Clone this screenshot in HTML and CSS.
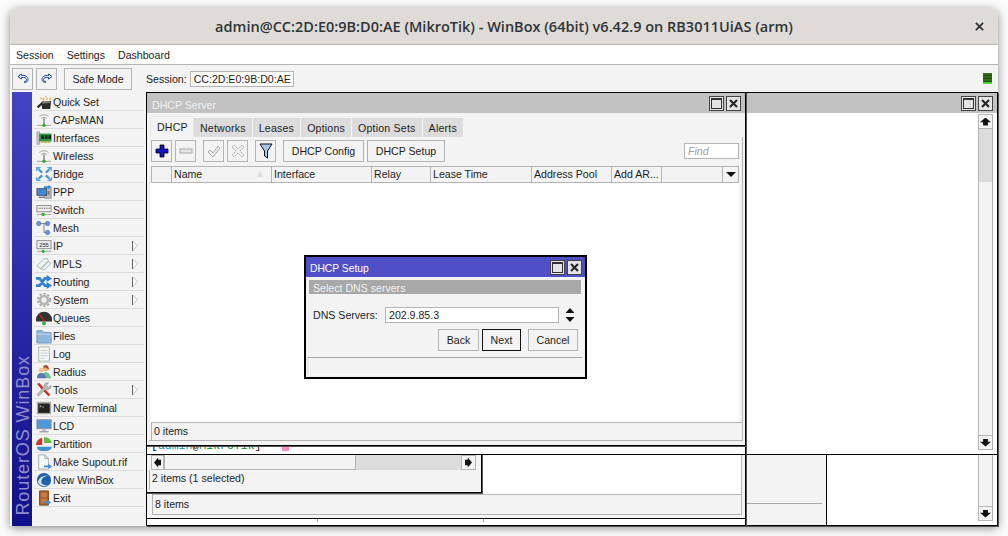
FILE: index.html
```html
<!DOCTYPE html>
<html lang="en">

<head>
    <meta charset="UTF-8">
    <meta name="viewport" content="width=device-width, initial-scale=1.0">
    <title>WinBox</title>
    <link rel="stylesheet" href="styles.css">
</head>

<body>
    <div class="app">
        <header class="titlebar">
            <span class="title-text">admin@CC:2D:E0:9B:D0:AE (MikroTik) - WinBox (64bit) v6.42.9 on RB3011UiAS (arm)</span>
            <svg class="title-close" width="9" height="9" viewBox="0 0 10 10"><path d="M1 1l8 8M9 1l-8 8" stroke="#2e3436" stroke-width="2"/></svg>
        </header>

        <nav class="menubar">
            <span>Session</span>
            <span>Settings</span>
            <span>Dashboard</span>
        </nav>

        <div class="toolbar">
            <button class="tool-btn"><svg width="12" height="11" viewBox="0 0 12 11"><path d="M4.500 1L1 3.500 4.500 6V4.500c3-.5 5 .5 5 2S8 9 7 9c2.500 1 4-1 4-2.500C11 3.500 8 2 4.500 2.500z" fill="#fff" stroke="#123a9c"/></svg></button>
            <button class="tool-btn"><svg width="12" height="11" viewBox="0 0 12 11"><path d="M7.500 1L11 3.500 7.500 6V4.500c-3-.5-5 .5-5 2S4 9 5 9C2.500 10 1 8 1 6.500 1 3.500 4 2 7.500 2.500z" fill="#fff" stroke="#123a9c"/></svg></button>
            <button class="safe-btn">Safe Mode</button>
            <label class="session-label">Session:</label>
            <div class="session-field">CC:2D:E0:9B:D0:AE</div>
            <div class="indicator"><i></i><i></i><i></i><i class="on"></i></div>
        </div>

        <div class="main">
            <div class="brand"><span>RouterOS WinBox</span></div>

            <ul class="menu">
                <li><svg class="ico" viewBox="0 0 18 16"><path d="M1 13l7-6 1.500 1.500-7 6.500z" fill="#222"/><path d="M6 8l11-1-1 9H7z" fill="#2a2a2a"/><path d="M7 8l9-1v2l-9 1z" fill="#777"/><path d="M8 7l1-4M12 6l1-3M15 6l2-3M5 3l2 2M11 1v2" stroke="#e6b422" stroke-width="1.200"/></svg>Quick Set</li>
                <li><svg class="ico" viewBox="0 0 18 16"><path d="M4 4q5-4 10 0M6 6q3-2 6 0" fill="none" stroke="#9a9a9a"/><path d="M9 6v8" stroke="#777" stroke-width="1.400"/><path d="M1 14h16" stroke="#999"/><circle cx="9" cy="14" r="2" fill="#32b232"/></svg>CAPsMAN</li>
                <li><svg class="ico" viewBox="0 0 18 16"><path d="M1 1h3v14H1z" fill="#c4c4c4" stroke="#888" stroke-width=".6"/><rect x="3.500" y="3" width="14" height="9" fill="#2c9a44"/><path d="M6 5h3v4H6zM10 5h3v4h-3zM14 5h3v4h-3z" fill="#16261a"/><path d="M5 12h11v1.500H5z" fill="#d8b74a"/></svg>Interfaces</li>
                <li><svg class="ico" viewBox="0 0 18 16"><path d="M4 4q5-4 10 0M6 6q3-2 6 0" fill="none" stroke="#9a9a9a"/><path d="M9 6v8" stroke="#777" stroke-width="1.400"/><path d="M1 14h16" stroke="#999"/><circle cx="9" cy="14" r="2" fill="#32b232"/></svg>Wireless</li>
                <li><svg class="ico" viewBox="0 0 18 16"><g stroke="#3f8fd8" stroke-width="2.400"><path d="M3 3l4 3.500M15 3l-4 3.500M3 13l4-3.500M15 13l-4-3.500"/></g><path d="M0 0h6L0 5zM18 0h-6l6 5zM0 16h6l-6-5zM18 16h-6l6-5z" fill="#5aa6e6"/></svg>Bridge</li>
                <li><svg class="ico" viewBox="0 0 18 16"><rect x="10" y="3" width="7" height="12" fill="#b9b9b9" stroke="#666" stroke-width=".6"/><rect x="1" y="4" width="11" height="8" fill="#3c8ad0" stroke="#445" stroke-width=".8"/><path d="M3 14h7" stroke="#778" stroke-width="1.600"/><path d="M9 1.500h5V0l3.500 2.500L14 5V3.500H9z" fill="#3c8ad0"/><path d="M13 8h2M13 10h2" stroke="#333"/></svg>PPP</li>
                <li><svg class="ico" viewBox="0 0 18 16"><rect x="1" y="3" width="16" height="7" fill="#eee" stroke="#888"/><path d="M3 6h1M5 6h1M7 6h1M9 6h1M11 6h1M13 6h1M15 6h1" stroke="#333"/><path d="M1 13h16" stroke="#999"/><circle cx="8" cy="13" r="2" fill="#32b232"/></svg>Switch</li>
                <li><svg class="ico" viewBox="0 0 18 16"><path d="M3 3h10M9 3v10h4" fill="none" stroke="#777"/><circle cx="3" cy="3" r="2.500" fill="#6f8fe0" stroke="#456" stroke-width=".5"/><circle cx="13" cy="3" r="2.500" fill="#6f8fe0" stroke="#456" stroke-width=".5"/><circle cx="13" cy="13" r="2.500" fill="#6f8fe0" stroke="#456" stroke-width=".5"/></svg>Mesh</li>
                <li class="has-sub"><svg class="ico" viewBox="0 0 18 16"><rect x="1" y="2" width="16" height="9" fill="#eee" stroke="#888"/><text x="9" y="9.500" class="ico-text">255</text><path d="M1 14h16" stroke="#999"/><circle cx="8" cy="14" r="1.800" fill="#32b232"/></svg>IP<svg class="sub-arrow" width="6" height="10" viewBox="0 0 6 10"><path d="M.5 0l5 4.500-5 5.500z" fill="#fafafa" stroke="#999" stroke-width=".5"/><path d="M.5 0v10" stroke="#666"/></svg></li>
                <li class="has-sub"><svg class="ico" viewBox="0 0 18 16"><path d="M1 10l8-8h4l1 3-8 9zM5 13l8-8 3 1v2l-7 7z" fill="#eef2f2" stroke="#a9b6b6"/></svg>MPLS<svg class="sub-arrow" width="6" height="10" viewBox="0 0 6 10"><path d="M.5 0l5 4.500-5 5.500z" fill="#fafafa" stroke="#999" stroke-width=".5"/><path d="M.5 0v10" stroke="#666"/></svg></li>
                <li class="has-sub"><svg class="ico" viewBox="0 0 18 16"><g fill="none" stroke="#2f7fd6" stroke-width="3"><path d="M0 4h4l6 8h3M0 12h4l6-8h3"/></g><path d="M12 0l6 4-6 4zM12 8l6 4-6 4z" fill="#2f7fd6"/></svg>Routing<svg class="sub-arrow" width="6" height="10" viewBox="0 0 6 10"><path d="M.5 0l5 4.500-5 5.500z" fill="#fafafa" stroke="#999" stroke-width=".5"/><path d="M.5 0v10" stroke="#666"/></svg></li>
                <li class="has-sub"><svg class="ico" viewBox="0 0 18 16"><circle cx="9" cy="8" r="4.500" fill="none" stroke="#b5b5b5" stroke-width="3"/><circle cx="9" cy="8" r="7" fill="none" stroke="#a5a5a5" stroke-width="2" stroke-dasharray="2.500 2"/></svg>System<svg class="sub-arrow" width="6" height="10" viewBox="0 0 6 10"><path d="M.5 0l5 4.500-5 5.500z" fill="#fafafa" stroke="#999" stroke-width=".5"/><path d="M.5 0v10" stroke="#666"/></svg></li>
                <li><svg class="ico" viewBox="0 0 18 16"><path d="M0 10a9 9 0 0 1 18 0v2H0z" fill="#333"/><path d="M4 4l6 8" stroke="#e02020" stroke-width="1.200"/><circle cx="9" cy="14" r="2.200" fill="#32b232"/></svg>Queues</li>
                <li><svg class="ico" viewBox="0 0 18 16"><path d="M1 4V2h6l2 2h8v12H1z" fill="#8fb8dc" stroke="#6f97bc"/><path d="M1 6h16" stroke="#c6dcef"/></svg>Files</li>
                <li><svg class="ico" viewBox="0 0 18 16"><path d="M3 0h12v16H3z" fill="#f4f7f5" stroke="#a5b2ac"/><path d="M5 4h8M5 7h8M5 10h8M5 13h5" stroke="#c2ccc8"/></svg>Log</li>
                <li><svg class="ico" viewBox="0 0 18 16"><circle cx="11" cy="4" r="3" fill="#e8b070"/><path d="M8 3a3 3 0 0 1 6 0l1 3-2-2-3-1z" fill="#b04a20"/><path d="M7 15q0-7 4-7t6 7z" fill="#70c090"/><circle cx="6" cy="6" r="2.700" fill="#eec08c"/><path d="M1 15q0-6 5-6t5 6z" fill="#5a7ab0"/></svg>Radius</li>
                <li class="has-sub"><svg class="ico" viewBox="0 0 18 16"><path d="M1 1l3-1 4 5 8 8-2 2-8-8z" fill="#c83020"/><path d="M17 3l-3 2-2-2 2-3a4 4 0 0 0-5 5L1 13l2 2 8-8a4 4 0 0 0 6-4z" fill="#bcbcbc" stroke="#777" stroke-width=".5"/></svg>Tools<svg class="sub-arrow" width="6" height="10" viewBox="0 0 6 10"><path d="M.5 0l5 4.500-5 5.500z" fill="#fafafa" stroke="#999" stroke-width=".5"/><path d="M.5 0v10" stroke="#666"/></svg></li>
                <li><svg class="ico" viewBox="0 0 18 16"><rect x="1" y="1" width="16" height="14" fill="#a8a8a8"/><rect x="2.500" y="3" width="13" height="10.500" fill="#222"/><path d="M4 5l2 1-2 1M7 7h2" stroke="#ccc" fill="none" stroke-width=".8"/></svg>New Terminal</li>
                <li><svg class="ico" viewBox="0 0 18 16"><rect x="1" y="1" width="16" height="10" fill="#4a9adf" stroke="#889"/><path d="M7 11h4v3H7z" fill="#b8bcc0"/><path d="M4 14.500h10" stroke="#889" stroke-width="1.200"/></svg>LCD</li>
                <li><svg class="ico" viewBox="0 0 18 16"><path d="M7 1v8H0q0-6 7-8z" fill="#d83030"/><path d="M9 0q7 0 9 7H9z" fill="#60c040"/><path d="M1 11h17q-1 5-9 5t-8-5z" fill="#3c90d0"/></svg>Partition</li>
                <li><svg class="ico" viewBox="0 0 18 16"><path d="M3 0h7l4 4v12H3z" fill="#f5f8f8" stroke="#9aa6a6"/><path d="M10 0v4h4" fill="none" stroke="#9aa6a6"/><path d="M9 12h5v-2l4 3-4 3v-2H9z" fill="#3c8ad8"/></svg>Make Supout.rif</li>
                <li><svg class="ico" viewBox="0 0 18 16"><circle cx="9" cy="8" r="8" fill="#1d5fa8"/><path d="M2 10q3-8 12-7-7 1-8 6t8 5q-9 3-12-4z" fill="#cfe2f3"/></svg>New WinBox</li>
                <li><svg class="ico" viewBox="0 0 18 16"><path d="M4 0h10v16H4z" fill="#b5622a" stroke="#7a3f18"/><path d="M6 2h6v5H6zM6 9h6v5H6z" fill="#c97c42"/><path d="M8 12h5v-2l4 3-4 3v-2H8z" fill="#3c8ad8"/></svg>Exit</li>
            </ul>

            <div class="desktop">
                <section class="win win-right">
                    <div class="win-title">
                        <span class="win-name"></span>
                        <button class="win-btn"><i class="max-box"></i></button>
                        <button class="win-btn"><svg width="9" height="9" viewBox="0 0 9 9"><path d="M1 1l7 7M8 1L1 8" stroke="#222" stroke-width="2"/></svg></button>
                    </div>
                    <div class="right-body">
                        <div class="vscroll">
                            <div class="sb-btn"><i class="arrow-up"></i></div>
                            <div class="sb-thumb"></div>
                            <div class="sb-track"></div>
                            <div class="sb-btn"><i class="arrow-down"></i></div>
                        </div>
                    </div>
                </section>

                <section class="win win-note">
                    <div class="note-status"></div>
                </section>

                <section class="win win-logs">
                    <div class="vscroll">
                        <div class="sb-track"></div>
                        <div class="sb-btn"><i class="arrow-down"></i></div>
                    </div>
                </section>

                <section class="win win-under">
                    <div class="term-strip">
                        <span class="term-text"><b>[</b><em>admin</em><b>@</b><strong>MikroTik</strong><b>]</b></span>
                        <i class="term-cursor"></i>
                    </div>
                    <div class="under-list"></div>
                    <div class="status under-status">8 items</div>
                    <div class="under-foot"><i></i><i></i></div>
                </section>

                <section class="win win-list">
                    <div class="hscroll">
                        <div class="sb-btn hs-left"><i class="arrow-left"></i></div>
                        <div class="hs-thumb"></div>
                        <div class="hs-track"></div>
                        <div class="sb-btn"><i class="arrow-right"></i></div>
                    </div>
                    <div class="status list-status">2 items (1 selected)</div>
                </section>

                <section class="win win-dhcp">
                    <div class="win-title">
                        <span class="win-name">DHCP Server</span>
                        <button class="win-btn"><i class="max-box"></i></button>
                        <button class="win-btn"><svg width="9" height="9" viewBox="0 0 9 9"><path d="M1 1l7 7M8 1L1 8" stroke="#222" stroke-width="2"/></svg></button>
                    </div>
                    <div class="tabs">
                        <span class="tab active">DHCP</span>
                        <span class="tab">Networks</span>
                        <span class="tab">Leases</span>
                        <span class="tab">Options</span>
                        <span class="tab">Option Sets</span>
                        <span class="tab">Alerts</span>
                    </div>
                    <div class="tab-panel">
                        <div class="actions">
                            <button class="act-btn"><svg width="14" height="14" viewBox="0 0 14 14"><path d="M5 1h4v4h4v4H9v4H5V9H1V5h4z" fill="#1212c8" stroke="#000" stroke-width=".8"/></svg></button>
                            <button class="act-btn"><svg width="14" height="8" viewBox="0 0 14 8"><rect x="1" y="2" width="12" height="4" fill="#e4e4e4" stroke="#aaa"/></svg></button>
                            <button class="act-btn gap-left"><svg width="14" height="14" viewBox="0 0 14 14"><path d="M1 8l2-2 3 3 5-7 2 2-7 9z" fill="#eee" stroke="#aaa"/></svg></button>
                            <button class="act-btn"><svg width="14" height="14" viewBox="0 0 14 14"><path d="M1 3l2-2 4 4 4-4 2 2-4 4 4 4-2 2-4-4-4 4-2-2 4-4z" fill="#eee" stroke="#aaa" stroke-dasharray="2 1"/></svg></button>
                            <button class="act-btn gap-left"><svg width="14" height="16" viewBox="0 0 14 16"><path d="M1 1h12L8.500 8v7l-3-2V8z" fill="#a9c7e6" stroke="#111"/></svg></button>
                            <button class="text-btn gap-left config-btn">DHCP Config</button>
                            <button class="text-btn setup-btn">DHCP Setup</button>
                            <div class="find">Find</div>
                        </div>
                        <div class="table">
                            <div class="thead">
                                <span></span>
                                <span class="sorted">Name</span>
                                <span>Interface</span>
                                <span>Relay</span>
                                <span>Lease Time</span>
                                <span>Address Pool</span>
                                <span>Add AR...</span>
                                <span></span>
                                <span class="col-menu"><i class="col-arrow"></i></span>
                            </div>
                            <div class="tbody"></div>
                        </div>
                        <div class="status">0 items</div>
                    </div>
                </section>

                <section class="win win-setup">
                    <div class="win-title setup-title">
                        <span class="win-name">DHCP Setup</span>
                        <button class="win-btn"><i class="max-box"></i></button>
                        <button class="win-btn"><svg width="9" height="9" viewBox="0 0 9 9"><path d="M1 1l7 7M8 1L1 8" stroke="#222" stroke-width="2"/></svg></button>
                    </div>
                    <div class="setup-band">Select DNS servers</div>
                    <div class="setup-row">
                        <label>DNS Servers:</label>
                        <div class="setup-input">202.9.85.3</div>
                        <svg class="spinner" width="10" height="14" viewBox="0 0 10 14"><path d="M5 0l4.500 5h-9zM5 14L.5 9h9z" fill="#111"/></svg>
                    </div>
                    <div class="setup-buttons">
                        <button class="text-btn back-btn">Back</button>
                        <button class="text-btn next-btn">Next</button>
                        <button class="text-btn cancel-btn">Cancel</button>
                    </div>
                    <div class="setup-status"></div>
                </section>
            </div>
        </div>
    </div>
</body>

</html>
```

FILE: styles.css
```css
* {
    box-sizing: border-box;
}

body {
    margin: 0;
    height: 536px;
    overflow: hidden;
    background-color: #fbfbfb;
    font-family: "Liberation Sans", Arial, sans-serif;
    font-size: 10.6px;
    color: #1c1c1c;
}

button {
    font: inherit;
    color: inherit;
    padding: 0;
    background-color: #f3f3f3;
    border: 1px solid #b4b4b4;
}

.app {
    display: flex;
    flex-direction: column;
    width: 988px;
    height: 518px;
    margin: 8px 0 0 10px;
    background-color: #f3f3f3;
    border-radius: 8px 8px 0 0;
    box-shadow: 0 2px 10px rgba(0, 0, 0, 0.45);
}

/* window manager title */
.titlebar {
    display: flex;
    align-items: center;
    justify-content: center;
    flex: none;
    position: relative;
    height: 37px;
    background-color: #dfdcd8;
    border-bottom: 1px solid #b8b5b1;
    border-radius: 8px 8px 0 0;
}

.title-text {
    font-family: "Open Sans", sans-serif;
    font-size: 14.5px;
    font-weight: 600;
    color: #2e3436;
}

.title-close {
    position: absolute;
    right: 14px;
    top: 14px;
}

.menubar {
    display: flex;
    align-items: center;
    gap: 13px;
    flex: none;
    height: 20px;
    padding-left: 6px;
    background-color: #fff;
    border-bottom: 1px solid #b4b4b4;
}

.toolbar {
    display: flex;
    align-items: center;
    flex: none;
    height: 27px;
    padding-left: 2px;
}

.tool-btn {
    display: flex;
    align-items: center;
    justify-content: center;
    width: 21px;
    height: 22px;
    margin-right: 3px;
}

.safe-btn {
    width: 68px;
    height: 22px;
    margin-left: 4px;
}

.session-label {
    margin-left: 14px;
}

.session-field {
    width: 104px;
    height: 16px;
    margin-left: 3px;
    padding-left: 3px;
    line-height: 14px;
    background-color: #fff;
    border: 1px solid #b4b4b4;
}

.indicator {
    display: flex;
    flex-direction: column;
    gap: 1px;
    width: 9px;
    height: 11px;
    margin-left: auto;
    margin-right: 6px;
    background-color: #1e4d0c;
}

.indicator i {
    flex: 1;
    background-color: #2f7016;
}

.indicator .on {
    background-color: #3ee02a;
}

.main {
    display: flex;
    flex: 1;
    min-height: 0;
}

/* left side */
.brand {
    display: flex;
    align-items: flex-end;
    justify-content: center;
    flex: none;
    width: 20px;
    margin-left: 2px;
    padding: 0 0 10px 1px;
    background: linear-gradient(#4242c4, #10108c);
}

.brand span {
    writing-mode: vertical-rl;
    transform: rotate(180deg);
    font-size: 18px;
    line-height: 20px;
    white-space: nowrap;
    letter-spacing: 0.9px;
    color: #8e8ec6;
}

.menu {
    flex: none;
    width: 114px;
    margin: 0;
    padding: 1px 2px 0 2px;
    list-style: none;
}

.menu li {
    display: flex;
    align-items: center;
    height: 18px;
    padding: 0 6px 0 2px;
    border-bottom: 1px solid #dcdcdc;
}

.ico {
    width: 16px;
    height: 16px;
    flex: none;
    margin-right: 1px;
}

.ico-text {
    font-size: 6.5px;
    text-anchor: middle;
    fill: #222;
}

.sub-arrow {
    margin-left: auto;
}

/* windows on the desktop */
.desktop {
    position: relative;
    flex: 1;
}

.win {
    position: absolute;
    display: flex;
    flex-direction: column;
    background-color: #f3f3f3;
    border: 1px solid #000;
    box-shadow: 1px 1px 0 #555;
}

.win-title {
    display: flex;
    align-items: center;
    flex: none;
    height: 20px;
    padding: 0 4px 0 5px;
    background-color: #c2c2c2;
    color: #f0f0f0;
}

.win-name {
    flex: 1;
    padding-top: 3px;
}

.win-btn {
    display: flex;
    align-items: center;
    justify-content: center;
    width: 15px;
    height: 15px;
    margin-left: 2px;
    background-color: #e4e4e4;
    border: 1px solid #444;
}

.max-box {
    width: 11px;
    height: 11px;
    border: 1px solid #333;
    border-top-width: 2px;
}

.win-dhcp {
    left: 0;
    top: 0;
    width: 600px;
    height: 354px;
}

.tabs {
    display: flex;
    flex: none;
    height: 24px;
    padding: 3px 0 0 3px;
    letter-spacing: 0.2px;
}

.tab {
    display: flex;
    align-items: center;
    height: 19px;
    margin: 2px 1px 0 0;
    padding: 0 6px;
    background-color: #dcdcdc;
}

.tab.active {
    width: 44px;
    height: 21px;
    margin-top: 0;
    margin-right: 0;
    padding: 0 6px;
    background-color: #f3f3f3;
    border: 1px solid #e6e6e6;
    border-bottom: 0;
}

.tab-panel {
    display: flex;
    flex-direction: column;
    flex: 1;
    margin: 0 2px 4px 2px;
    border-right: 1px solid #b4b4b4;
    border-bottom: 1px solid #b4b4b4;
}

.actions {
    display: flex;
    align-items: center;
    flex: none;
    gap: 3px;
    height: 29px;
    padding: 1px 0 3px 2px;
}

.act-btn {
    display: flex;
    align-items: center;
    justify-content: center;
    width: 21px;
    height: 22px;
}

.gap-left {
    margin-left: 4px;
}

.text-btn {
    height: 22px;
}

.config-btn {
    width: 81px;
}

.setup-btn {
    width: 78px;
}

.find {
    width: 55px;
    height: 16px;
    margin-left: auto;
    margin-right: 3px;
    padding-left: 3px;
    line-height: 14px;
    font-style: italic;
    color: #a0a0a0;
    background-color: #fff;
    border: 1px solid #b4b4b4;
}

.table {
    display: flex;
    flex-direction: column;
    flex: 1;
    margin: 0 3px 0 2px;
}

.thead {
    display: grid;
    grid-template-columns: 20px 100px 100px 59px 101px 80px 50px 61px 15px;
    flex: none;
    height: 17px;
    line-height: 15px;
    border: 1px solid #b4b4b4;
}

.thead span {
    padding-left: 2px;
    border-right: 1px solid #b4b4b4;
    white-space: nowrap;
}

.thead .col-menu {
    display: flex;
    align-items: center;
    justify-content: center;
    padding: 0;
    border-right: 0;
}

.col-arrow {
    width: 0;
    height: 0;
    border-left: 5px solid transparent;
    border-right: 5px solid transparent;
    border-top: 5px solid #111;
}

.sorted {
    position: relative;
}

.sorted::after {
    content: "";
    position: absolute;
    right: 8px;
    top: 4px;
    width: 0;
    height: 0;
    border-bottom: 6px solid #ddd;
    border-left: 3px solid transparent;
    border-right: 3px solid transparent;
}

.tbody {
    flex: 1;
    background-color: #fff;
}

.status {
    flex: none;
    height: 18px;
    margin: 0 0 0 2px;
    padding-left: 2px;
    line-height: 16px;
    border-left: 1px solid #b4b4b4;
    border-top: 1px solid #b4b4b4;
}

.arrow-up,
.arrow-down,
.arrow-left,
.arrow-right {
    display: block;
    background-color: #111;
}

.arrow-up {
    width: 11px;
    height: 8px;
    clip-path: polygon(50% 0, 100% 60%, 72% 60%, 72% 100%, 28% 100%, 28% 60%, 0 60%);
}

.arrow-down {
    width: 11px;
    height: 8px;
    clip-path: polygon(28% 0, 72% 0, 72% 40%, 100% 40%, 50% 100%, 0 40%, 28% 40%);
}

.arrow-left {
    width: 7px;
    height: 10px;
    clip-path: polygon(0 50%, 60% 0, 60% 22%, 100% 22%, 100% 78%, 60% 78%, 60% 100%);
}

.arrow-right {
    width: 7px;
    height: 10px;
    clip-path: polygon(0 22%, 40% 22%, 40% 0, 100% 50%, 40% 100%, 40% 78%, 0 78%);
}

/* windows behind */
.win-right {
    left: 598px;
    top: 0;
    width: 254px;
    height: 363px;
}

.right-body {
    display: flex;
    justify-content: flex-end;
    flex: 1;
    padding: 1px 4px 4px 0;
    background-color: #fff;
}

.vscroll {
    display: flex;
    flex-direction: column;
    width: 15px;
    border-left: 1px solid #b4b4b4;
    border-right: 1px solid #b4b4b4;
    background-color: #f3f3f3;
}

.sb-btn {
    display: flex;
    align-items: center;
    justify-content: center;
    flex: none;
    width: 15px;
    height: 15px;
    background-color: #f3f3f3;
    border: 1px solid #b4b4b4;
}

.vscroll .sb-btn {
    width: 15px;
    margin-left: -1px;
}

.sb-thumb {
    height: 53px;
    background-color: #dcdcdc;
}

.sb-track {
    flex: 1;
}

.win-note {
    justify-content: flex-end;
    left: 598px;
    top: 362px;
    width: 83px;
    height: 72px;
}

.note-status {
    height: 22px;
    margin-right: 4px;
    border-top: 1px solid #a8a8a8;
}

.win-logs {
    align-items: flex-end;
    left: 680px;
    top: 362px;
    width: 172px;
    height: 72px;
    padding: 0 4px 4px 0;
    background-color: #fff;
}

.win-logs .vscroll {
    flex: 1;
}

.win-under {
    left: 0;
    top: 353px;
    width: 600px;
    height: 81px;
}

.term-strip {
    display: flex;
    flex: none;
    height: 9px;
    padding-left: 4px;
    overflow: hidden;
    background-color: #fff;
    border-bottom: 1px solid #000;
}

.term-text {
    height: 13px;
    margin-top: -7px;
    font-family: "Liberation Mono", monospace;
    font-size: 11.5px;
    line-height: 13px;
    white-space: nowrap;
}

.term-text b {
    font-weight: normal;
    color: #111;
}

.term-text em {
    font-style: normal;
    color: #0a98a0;
}

.term-text strong {
    font-weight: normal;
    color: #0b8a1c;
}

.term-cursor {
    flex: none;
    width: 7px;
    height: 5px;
    margin-left: 21px;
    background-color: #ff8cc8;
}

.under-list {
    flex: none;
    height: 39px;
    margin: 0 3px 0 5px;
    background-color: #fff;
    border-right: 1px solid #b4b4b4;
    border-left: 1px solid #b4b4b4;
}

.under-status {
    height: 21px;
    margin: 0 3px 0 5px;
    line-height: 18px;
    border-bottom: 1px solid #b4b4b4;
    border-right: 1px solid #b4b4b4;
}

.under-foot {
    display: flex;
    gap: 165px;
    flex: 1;
    margin-top: 3px;
    padding-left: 170px;
    background-color: #fff;
    border-top: 1px solid #000;
}

.under-foot i {
    width: 1px;
    height: 3px;
    background-color: #999;
}

.win-list {
    left: 0;
    top: 362px;
    width: 336px;
    height: 39px;
}

.hscroll {
    display: flex;
    flex: none;
    height: 15px;
    margin: 0 5px 0 4px;
}

.hs-left {
    width: 13px;
}

.hs-thumb {
    width: 192px;
    background-color: #f3f3f3;
    border: 1px solid #b4b4b4;
    border-top: 0;
}

.hs-track {
    flex: 1;
    background-color: #dcdcdc;
}

.list-status {
    height: 20px;
    margin-right: 5px;
    line-height: 16px;
    border-top: 0;
}

/* wizard dialog */
.win-setup {
    left: 158px;
    top: 163px;
    width: 283px;
    height: 124px;
    border-width: 2px;
    box-shadow: none;
}

.setup-title {
    height: 20px;
    padding: 0 3px 0 4px;
    background-color: #4f50c8;
    color: #fff;
}

.setup-title .win-name {
    padding-top: 2px;
    font-size: 10.3px;
}

.setup-band {
    flex: none;
    height: 14px;
    margin: 3px 4px 0 3px;
    padding-left: 4px;
    line-height: 16px;
    background-color: #a8a8a8;
    color: #f2f2f2;
}

.setup-row {
    display: flex;
    align-items: center;
    flex: none;
    height: 16px;
    margin: 13px 0 0 7px;
}

.setup-row label {
    width: 72px;
}

.setup-input {
    width: 174px;
    height: 16px;
    padding-left: 3px;
    line-height: 14px;
    background-color: #fff;
    border: 1px solid #b4b4b4;
}

.spinner {
    margin-left: 6px;
}

.setup-buttons {
    display: flex;
    flex: none;
    height: 22px;
    margin: 6px 0 0 132px;
}

.back-btn {
    width: 41px;
}

.next-btn {
    width: 39px;
    margin-left: 3px;
    border-color: #111;
}

.cancel-btn {
    width: 50px;
    margin-left: 7px;
}

.setup-status {
    height: 18px;
    margin: 6px 3px 0 1px;
    border-top: 1px solid #a8a8a8;
    border-left: 1px solid #e0e0e0;
    border-bottom: 1px solid #fafafa;
}
```
